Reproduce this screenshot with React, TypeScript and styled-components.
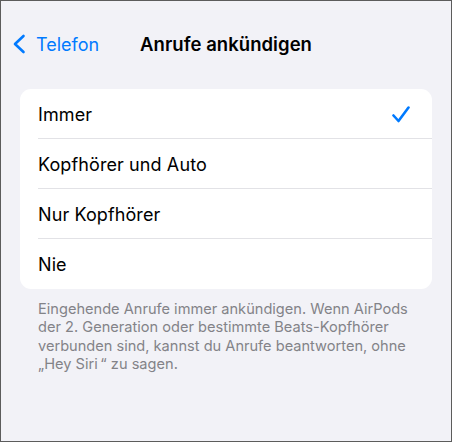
import React from 'react';
import styled, { createGlobalStyle } from 'styled-components';

const GlobalStyle = createGlobalStyle`
  html, body {
    margin: 0;
    padding: 0;
    background: #f2f2f7;
  }
  * {
    box-sizing: border-box;
  }
`;

const options = ['Immer', 'Kopfhörer und Auto', 'Nur Kopfhörer', 'Nie'];

export default function App() {
  const selected = 'Immer';

  return (
    <Frame>
      <GlobalStyle />
      <NavBar>
        <BackButton>
          <svg width="14" height="20" viewBox="0 0 14 20" fill="none">
            <path
              d="M11.5 2 L3 10 L11.5 18"
              stroke="#007aff"
              strokeWidth="2.6"
              strokeLinecap="round"
              strokeLinejoin="round"
            />
          </svg>
          <BackLabel>Telefon</BackLabel>
        </BackButton>
        <Title>Anrufe ankündigen</Title>
        <span />
      </NavBar>

      <Content>
        <Card>
          {options.map((option, i) => (
            <Row key={option}>
              <RowInner last={i === options.length - 1}>
                <RowLabel>{option}</RowLabel>
                {option === selected && (
                  <svg width="18" height="17" viewBox="0 0 18 17" fill="none">
                    <path
                      d="M1.5 9.5 L6.5 15 L16.5 1.5"
                      stroke="#007aff"
                      strokeWidth="2.6"
                      strokeLinecap="round"
                      strokeLinejoin="round"
                    />
                  </svg>
                )}
              </RowInner>
            </Row>
          ))}
        </Card>
        <Footnote>
          Eingehende Anrufe immer ankündigen. Wenn AirPods der 2. Generation
          oder bestimmte Beats-Kopfhörer verbunden sind, kannst du Anrufe
          beantworten, ohne „Hey Siri&thinsp;“ zu sagen.
        </Footnote>
      </Content>
    </Frame>
  );
}

const Frame = styled.div`
  width: 452px;
  height: 442px;
  border: 1px solid #5c5c5c;
  background: #f2f2f7;
  font-family: Inter, 'Noto Sans', sans-serif;
  color: #000;
  overflow: hidden;
`;

const NavBar = styled.div`
  display: grid;
  grid-template-columns: 1fr auto 1fr;
  align-items: center;
  height: 40px;
  margin-top: 23px;
  padding: 0 11px;
`;

const BackButton = styled.div`
  display: flex;
  align-items: center;
  gap: 10px;
  color: #007aff;
`;

const BackLabel = styled.span`
  font-size: 18px;
`;

const Title = styled.h1`
  margin: 0;
  font-size: 18.5px;
  font-weight: 600;
  letter-spacing: 0.05px;
`;

const Content = styled.div`
  padding: 0 19px;
  margin-top: 25px;
`;

const Card = styled.div`
  background: #fff;
  border-radius: 11px;
  overflow: hidden;
`;

const Row = styled.div`
  padding-left: 18px;
`;

const RowInner = styled.div<{ last?: boolean }>`
  display: flex;
  align-items: center;
  justify-content: space-between;
  height: 50px;
  padding: 1px 22px 0 0;
  border-bottom: ${(p) => (p.last ? 'none' : '1px solid #e2e2e6')};
`;

const RowLabel = styled.span`
  font-size: 18px;
  letter-spacing: 0.1px;
`;

const Footnote = styled.p`
  margin: 11px 0 0;
  padding: 0 18px;
  font-size: 14.6px;
  line-height: 18.3px;
  color: #838388;
`;
